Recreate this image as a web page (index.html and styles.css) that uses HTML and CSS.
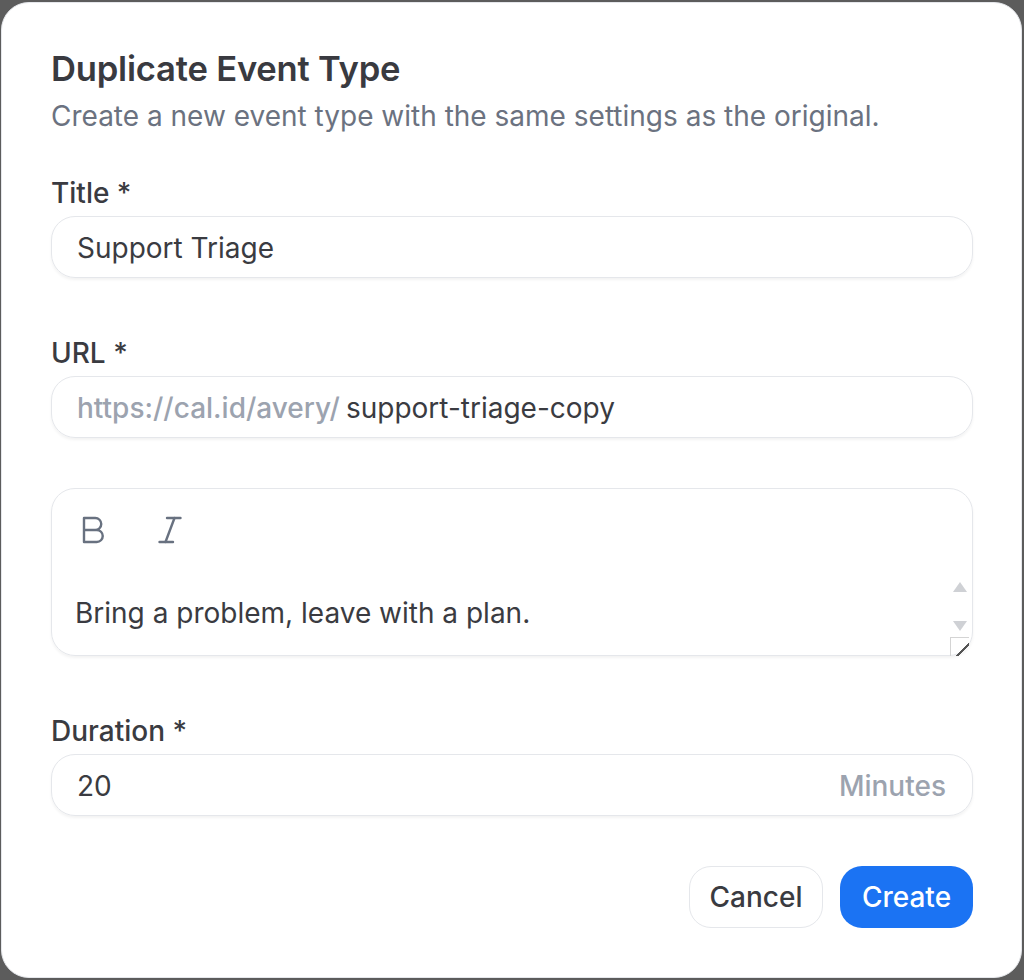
FILE: index.html
```html
<!DOCTYPE html>
<html>
<head>
<meta charset="utf-8">
<link rel="stylesheet" href="styles.css">
</head>
<body>
<div class="backdrop">
  <div class="dialog">
    <div class="header">
      <h1 class="title">Duplicate Event Type</h1>
      <p class="subtitle">Create a new event type with the same settings as the original.</p>
    </div>
    <div class="form">
      <div class="field">
        <label class="label">Title *</label>
        <div class="input"><span class="value">Support Triage</span></div>
      </div>
      <div class="field">
        <label class="label">URL *</label>
        <div class="input"><span class="prefix">https://cal.id/avery/</span><span class="value">support-triage-copy</span></div>
      </div>
      <div class="editor">
        <div class="toolbar">
          <svg class="tool" viewBox="0 0 24 24" width="36" height="36" fill="none" stroke="currentColor" stroke-width="1.6" stroke-linecap="round" stroke-linejoin="round"><path d="M6 12h8.5a4 4 0 0 1 0 8H6V4h7.5a4 4 0 0 1 0 8"/></svg>
          <svg class="tool" viewBox="0 0 24 24" width="36" height="36" fill="none" stroke="currentColor" stroke-width="1.6" stroke-linecap="round" stroke-linejoin="round"><line x1="19" x2="10" y1="4" y2="4"/><line x1="14" x2="5" y1="20" y2="20"/><line x1="15" x2="9" y1="4" y2="20"/></svg>
        </div>
        <div class="editor-body">
          <span class="value">Bring a problem, leave with a plan.</span>
          <div class="scroll">
            <span class="arrow up"></span>
            <span class="arrow down"></span>
            <span class="resizer"></span>
          </div>
        </div>
      </div>
      <div class="field">
        <label class="label">Duration *</label>
        <div class="input split"><span class="value">20</span><span class="suffix">Minutes</span></div>
      </div>
    </div>
    <div class="actions">
      <button class="btn cancel">Cancel</button>
      <button class="btn create">Create</button>
    </div>
  </div>
</div>
</body>
</html>
```
FILE: styles.css
```css
* { box-sizing: border-box; }
html, body { margin: 0; padding: 0; }
body {
  background: #5c5c5c;
  font-family: Inter, "Noto Sans", sans-serif;
  width: 1024px;
  height: 980px;
  overflow: hidden;
}
.backdrop {
  padding: 2px 2px 2px 1px;
  height: 980px;
}
.dialog {
  background: #ffffff;
  border: 1px solid #e5e7eb;
  border-radius: 28px;
  height: 976px;
  padding: 47px 48px 0 49px;
  display: flex;
  flex-direction: column;
}
.header { display: flex; flex-direction: column; gap: 12px; }
.title {
  margin: 0;
  font-size: 34.6px;
  line-height: 36px;
  font-weight: 600;
  color: #393a40;
  letter-spacing: -0.2px;
}
.subtitle {
  margin: 0;
  font-size: 28px;
  line-height: 36px;
  color: #6b7280;
}
.form {
  margin-top: 41px;
  display: flex;
  flex-direction: column;
  gap: 50px;
}
.field { display: flex; flex-direction: column; gap: 5px; }
.field + .field, .editor + .field { margin-top: 7px; }
.label {
  font-size: 28px;
  line-height: 36px;
  font-weight: 500;
  color: #3a3b41;
}
.input {
  height: 62px;
  border: 1px solid #e5e7eb;
  border-radius: 24px;
  box-shadow: 0 2px 3px rgba(0,0,0,0.05);
  display: flex;
  align-items: center;
  padding: 2px 26px 0 25px;
  font-size: 28px;
}
.input.split { justify-content: space-between; }
.value { color: #3a3b41; font-size: 28px; }
.prefix { color: #9ca3af; margin-right: 6px; font-weight: 500; }
.suffix { color: #9ca3af; font-weight: 500; }
.editor {
  height: 168px;
  border: 1px solid #e5e7eb;
  border-radius: 24px;
  box-shadow: 0 2px 3px rgba(0,0,0,0.05);
  display: flex;
  flex-direction: column;
}
.toolbar {
  display: flex;
  gap: 41px;
  padding: 23px 0 0 23px;
  color: #687180;
}
.tool { display: block; }
.editor-body {
  position: relative;
  flex: 1;
  display: flex;
  align-items: flex-start;
  padding: 47px 0 0 23px;
}
.editor-body .value { line-height: 36px; }
.scroll {
  position: absolute;
  right: 2px;
  top: 26px;
  width: 20px;
  height: 80px;
}
.arrow {
  position: absolute;
  left: 3px;
  width: 0;
  height: 0;
  border-left: 7px solid transparent;
  border-right: 7px solid transparent;
}
.arrow.up { top: 8px; border-bottom: 10px solid #cfd1d5; }
.arrow.down { top: 47px; border-top: 10px solid #cfd1d5; }
.resizer {
  position: absolute;
  left: 0;
  top: 63px;
  width: 19px;
  height: 19px;
  border-left: 1px solid #d4d4d4;
  border-top: 1px solid #d4d4d4;
  background: linear-gradient(135deg, transparent 62%, #555 62%, #555 70%, transparent 70%);
}
.actions {
  margin-top: 50px;
  display: flex;
  justify-content: flex-end;
  gap: 17px;
}
.btn {
  height: 62px;
  border-radius: 22px;
  font-family: Inter, "Noto Sans", sans-serif;
  font-size: 28px;
  font-weight: 500;
  padding: 0;
  cursor: pointer;
}
.cancel {
  width: 134px;
  background: #ffffff;
  border: 1px solid #e5e7eb;
  color: #3a3b41;
}
.create {
  width: 133px;
  background: #1b73f3;
  border: none;
  color: #ffffff;
}
```
